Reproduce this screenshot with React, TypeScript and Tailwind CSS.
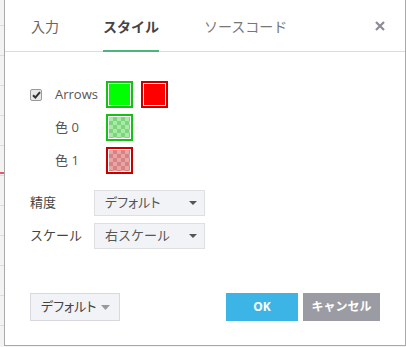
import React from "react";

const font = { fontFamily: '"Open Sans", "Noto Sans CJK JP", sans-serif' };

function Swatch({ border, fill, checker }: { border: string; fill: string; checker?: [string, string] }) {
  const bg = checker
    ? {
        backgroundColor: checker[0],
        backgroundImage: `linear-gradient(45deg, ${checker[1]} 25%, transparent 25%, transparent 75%, ${checker[1]} 75%), linear-gradient(45deg, ${checker[1]} 25%, transparent 25%, transparent 75%, ${checker[1]} 75%)`,
        backgroundSize: "8px 8px",
        backgroundPosition: "0 0, 4px 4px",
      }
    : { backgroundColor: fill };
  return (
    <div className="w-[27px] h-[27px] border-2 p-[1px] bg-white" style={{ borderColor: border }}>
      <div className="w-full h-full" style={bg} />
    </div>
  );
}

function Caret() {
  return (
    <svg width="8" height="5" viewBox="0 0 8 5" className="ml-auto">
      <path d="M0 0 L8 0 L4 4 Z" fill="#555" />
    </svg>
  );
}

export default function App() {
  return (
    <div className="w-[406px] h-[347px] bg-[#f3f3f3] relative overflow-hidden" style={font}>
      <div className="absolute left-0 top-0 w-[4px] h-full">
        {[25, 55, 85, 115, 145, 175, 205, 235, 265, 295, 325].map((y) => (
          <div key={y} className="absolute left-0 w-[4px] h-px bg-[#d8dde6]" style={{ top: y }} />
        ))}
        <div className="absolute left-0 top-[172px] w-[4px] h-[2px] bg-[#e05a6a]" />
      </div>
      <div className="ml-[4px] w-[402px] h-[346px] bg-white border-x border-b border-[#a9a9a9] flex flex-col">
        <div className="h-[52px] border-b border-[#dcdcdc] flex items-stretch pl-[26px] pr-[20px] relative">
          <div className="flex items-stretch text-[14px] whitespace-nowrap">
            <div className="flex items-center text-[#666] pt-[1px]">入力</div>
            <div className="flex items-center text-[#444] font-bold relative pt-[1px] ml-[44px]">
              スタイル
              <div className="absolute left-0 right-0 bottom-[-1px] h-[2px] bg-[#4cb47c]" />
            </div>
            <div className="flex items-center text-[#777] pt-[1px] ml-[45px]">ソースコード</div>
          </div>
          <div className="ml-auto flex items-center pt-[1px]">
            <svg width="10" height="10" viewBox="0 0 10 10">
              <path d="M1 1 L9 9 M9 1 L1 9" stroke="#8a8b94" strokeWidth="2.2" />
            </svg>
          </div>
        </div>

        <div className="pl-[25px] pt-[29px] flex flex-col">
          <div className="flex items-center">
            <div className="w-[12px] h-[12px] border border-[#9a9a9a] rounded-[2px] bg-[#e8e8e8] flex items-center justify-center">
              <svg width="9" height="8" viewBox="0 0 9 8">
                <path d="M1 4.2 L3.4 6.5 L8 1.2" stroke="#333" strokeWidth="2" fill="none" />
              </svg>
            </div>
            <div className="w-[51px] ml-[13px] text-[13px] text-[#555]">Arrows</div>
            <div className="flex gap-[8px]">
              <Swatch border="#16c016" fill="#00ff00" />
              <Swatch border="#c40000" fill="#ff0000" />
            </div>
          </div>
          <div className="flex items-center mt-[6px]">
            <div className="w-[12px]" />
            <div className="w-[51px] ml-[13px] text-[13px] text-[#555]">色 0</div>
            <Swatch border="#16c016" fill="" checker={["#a6eca6", "#7fd47f"]} />
          </div>
          <div className="flex items-center mt-[6px]">
            <div className="w-[12px]" />
            <div className="w-[51px] ml-[13px] text-[13px] text-[#555]">色 1</div>
            <Swatch border="#c40000" fill="" checker={["#eaa4a4", "#d48484"]} />
          </div>

          <div className="flex items-center mt-[16px]">
            <div className="w-[64px] text-[13px] text-[#444]">精度</div>
            <div className="w-[111px] h-[26px] bg-[#f2f3f6] border border-[#dedfe3] flex items-center pl-[10px] pr-[7px] text-[13px] text-[#555] whitespace-nowrap [font-feature-settings:'palt']">
              デフォルト
              <Caret />
            </div>
          </div>
          <div className="flex items-center mt-[7px]">
            <div className="w-[64px] text-[13px] text-[#444]">スケール</div>
            <div className="w-[111px] h-[26px] bg-[#f2f3f6] border border-[#dedfe3] flex items-center pl-[10px] pr-[7px] text-[13px] text-[#555] whitespace-nowrap">
              右スケール
              <Caret />
            </div>
          </div>
        </div>

        <div className="mt-auto mb-[24px] pl-[25px] pr-[25px] flex items-start">
          <div className="w-[90px] h-[28px] bg-[#f2f3f6] border border-[#d8d9de] flex items-center pl-[10px] pr-[9px] text-[13px] text-[#444] whitespace-nowrap [font-feature-settings:'palt']">
            デフォルト
            <svg width="9" height="5" viewBox="0 0 9 5" className="ml-auto">
              <path d="M0 0 L9 0 L4.5 5 Z" fill="#999" />
            </svg>
          </div>
          <div className="ml-auto flex gap-[5px]">
            <div className="w-[72px] h-[28px] bg-[#3cb4e5] text-white text-[12px] font-bold flex items-center justify-center pb-[1px]">OK</div>
            <div className="w-[77px] h-[28px] bg-[#9b9ca3] text-white text-[12px] font-bold flex items-center justify-center whitespace-nowrap">キャンセル</div>
          </div>
        </div>
      </div>
    </div>
  );
}
